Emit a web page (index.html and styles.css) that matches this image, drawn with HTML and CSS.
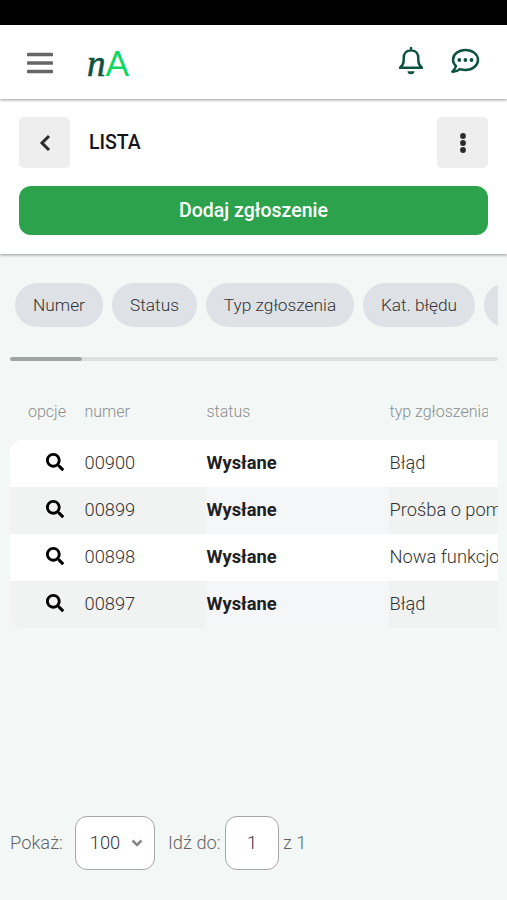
FILE: index.html
```html
<!DOCTYPE html>
<html lang="pl">
<head>
<meta charset="utf-8">
<meta name="viewport" content="width=device-width, initial-scale=1">
<title>Lista</title>
<link rel="stylesheet" href="styles.css">
</head>
<body>
<svg class="defs" width="0" height="0" aria-hidden="true">
<symbol id="search" viewBox="0 0 512 512"><path d="M505 442.700 405.300 343c-4.500-4.500-10.600-7-17-7H372c27.600-35.300 44-79.700 44-128C416 93.100 322.900 0 208 0S0 93.100 0 208s93.100 208 208 208c48.300 0 92.700-16.400 128-44v16.300c0 6.400 2.500 12.500 7 17l99.700 99.700c9.400 9.400 24.600 9.400 33.900 0l28.300-28.300c9.400-9.400 9.400-24.600.1-34zM208 336c-70.700 0-128-57.200-128-128 0-70.700 57.200-128 128-128 70.700 0 128 57.200 128 128 0 70.700-57.200 128-128 128z"/></symbol>
</svg>
<div class="statusbar"></div>
<header class="topbar">
  <svg class="menu" viewBox="0 0 26 24"><path d="M1.500 3.500h23M1.500 12h23M1.500 20.500h23"/></svg>
  <div class="logo"><span class="logo-n">n</span><span class="logo-a">A</span></div>
  <svg class="bell" viewBox="0 0 26 30"><path class="line" d="M13 4.300C8.200 4.300 5.700 8 5.700 12v2.500c0 3.500-1.500 5.400-3.600 7.300h21.800c-2.100-1.900-3.600-3.800-3.600-7.300V12c0-4-2.500-7.700-7.300-7.700zM13 1.900v2.400"/><path class="solid" d="M9.500 25.200h7a3.500 3 0 0 1-7 0z"/></svg>
  <svg class="chat" viewBox="0 0 30 26"><path class="line" d="M15.500 2C8.500 2 3 6.300 3 11.700c0 2.500 1.100 4.500 3 6.200-.4 2.200-1.600 4.100-3.600 5.800 3 .1 5.500-.8 7.400-2.600 1.700.6 3.600.9 5.700.9C22.500 22 28 17.400 28 11.900S22.500 2 15.500 2z"/><circle class="solid" cx="9.300" cy="12" r="1.900"/><circle class="solid" cx="15.400" cy="12" r="1.900"/><circle class="solid" cx="21.500" cy="12" r="1.900"/></svg>
</header>
<section class="heading">
  <div class="heading-row">
    <button class="square" aria-label="Wstecz"><svg class="back" viewBox="0 0 12 18"><path d="M10 2 3 9l7 7"/></svg></button>
    <h1>LISTA</h1>
    <button class="square" aria-label="Menu"><svg class="dots" viewBox="0 0 6 20"><circle cx="3" cy="3" r="2.900"/><circle cx="3" cy="10" r="2.900"/><circle cx="3" cy="17" r="2.900"/></svg></button>
  </div>
  <button class="add">Dodaj zgłoszenie</button>
</section>
<main>
  <div class="chips">
    <span class="chip numer">Numer</span>
    <span class="chip status">Status</span>
    <span class="chip typ">Typ zgłoszenia</span>
    <span class="chip kat">Kat. błędu</span>
    <span class="chip more"></span>
  </div>
  <div class="scroll"><div class="thumb"></div></div>
  <div class="table">
    <div class="row head"><span class="opt">opcje</span><span>numer</span><span>status</span><span class="last">typ zgłoszenia</span></div>
    <div class="row"><span class="opt"><svg><use href="#search"/></svg></span><span>00900</span><b>Wysłane</b><span>Błąd</span></div>
    <div class="row"><span class="opt"><svg><use href="#search"/></svg></span><span>00899</span><b>Wysłane</b><span>Prośba o pom</span></div>
    <div class="row"><span class="opt"><svg><use href="#search"/></svg></span><span>00898</span><b>Wysłane</b><span>Nowa funkcjo</span></div>
    <div class="row"><span class="opt"><svg><use href="#search"/></svg></span><span>00897</span><b>Wysłane</b><span>Błąd</span></div>
  </div>
</main>
<footer>
  <span class="show">Pokaż:</span>
  <div class="field select">100<svg viewBox="0 0 12 8"><path d="m1.500 1.500 4.500 4.500 4.500-4.500"/></svg></div>
  <span class="goto">Idź do:</span>
  <div class="field page">1</div>
  <span>z 1</span>
</footer>
</body>
</html>
```

FILE: styles.css
```css
* { box-sizing: border-box; }
body {
  margin: 0;
  height: 900px;
  display: flex;
  flex-direction: column;
  overflow: hidden;
  background: #f3f7f6;
  font: 300 18.300px/24px Roboto, sans-serif;
  color: #333;
}
svg { display: block; flex: none; }
.defs { position: absolute; }
button { border: 0; padding: 0; font: inherit; }
.statusbar { height: 25px; background: #000; flex: none; }
.topbar {
  height: 74px;
  flex: none;
  display: flex;
  align-items: flex-start;
  padding: 0 27px 0 27px;
  background: #fff;
  box-shadow: 0 1px 3px rgba(0,0,0,.4);
  position: relative;
  z-index: 2;
}
.menu { width: 26px; height: 24px; margin-top: 26px; stroke: #666; stroke-width: 3.600; stroke-linecap: round; }
.logo { display: flex; align-items: baseline; margin: 17px auto 0 34px; line-height: 40px; }
.logo-n { font: italic 400 37px/40px "Liberation Serif", serif; color: #12513f; -webkit-text-stroke: .6px #12513f; }
.logo-a { font: 400 35px/40px Lato, sans-serif; color: #12d863; }
.bell { width: 26px; height: 30px; margin-top: 21px; }
.chat { width: 30px; height: 26px; margin: 23px 0 0 26px; }
.line { fill: none; stroke: #0b5340; stroke-width: 2.500; stroke-linejoin: round; stroke-linecap: round; }
.solid { fill: #0b5340; }
.heading {
  height: 155px;
  flex: none;
  padding: 18px 19px 0;
  background: #fff;
  box-shadow: 0 1px 3px rgba(0,0,0,.4);
}
.heading-row { display: flex; align-items: center; }
.square { width: 51px; height: 51px; border-radius: 5px; background: #eee; display: flex; align-items: center; justify-content: center; }
.back { width: 12px; height: 18px; fill: none; stroke: #2b2b2b; stroke-width: 3; }
.dots { width: 6px; height: 20px; fill: #2b2b2b; }
h1 { margin: 0 auto 0 19px; padding-top: 1px; font-size: 19.500px; font-weight: 500; color: #15151c; }
.add { display: block; width: 100%; height: 49px; margin-top: 18px; border-radius: 12px; background: #2ca24c; color: #fff; font-size: 19.500px; font-weight: 500; }
main { padding: 0 9px 0 10px; overflow: hidden; }
.chips { display: flex; gap: 9px; padding: 29px 0 0 5px; overflow: hidden; }
.chip { height: 44px; flex: none; border-radius: 22px; background: #dee1e6; text-align: center; font-size: 17.300px; line-height: 44px; }
.numer { width: 88px; }
.status { width: 85px; }
.typ { width: 148px; }
.kat { width: 112px; }
.more { width: 100px; }
.scroll { height: 4px; margin-top: 30px; border-radius: 2px; background: #dce0df; }
.thumb { width: 72px; height: 4px; border-radius: 2px; background: #9fa5a4; }
.table { margin-top: 26px; border-radius: 12px 0 0 12px; overflow: hidden; }
.row { display: grid; grid-template-columns: 74px 122px 183px 109px; height: 47px; line-height: 45px; white-space: nowrap; background: #fff; }
.row > * { overflow: hidden; padding-left: .5px; }
.row:nth-child(odd) { background: #f1f2f2; }
.row:nth-child(odd) b { background: #f5f6f8; }
.row:nth-child(2) { border-top-left-radius: 12px; }
.row.head { height: 53px; line-height: 49px; font-size: 16px; color: #8c8f8f; background: none; }
.row.head .opt { padding-left: 18px; }
.head .last { margin-right: 10px; }
.opt svg { width: 18px; height: 18px; margin: 13px 0 0 35.500px; fill: #000; }
b { font-weight: 700; color: #202022; }
footer { display: flex; align-items: center; margin: auto 0 30px 10px; height: 54px; color: #666; }
.field { height: 54px; border: 1px solid #a6a6a6; border-radius: 12px; background: #fff; color: #333; display: flex; align-items: center; justify-content: center; }
.show { width: 65px; }
.select { width: 80px; gap: 11px; padding-left: 3px; }
.select svg { width: 12px; height: 8px; fill: none; stroke: #888; stroke-width: 2.600; }
.goto { width: 57px; margin-left: 13px; }
.page { width: 54px; margin-right: 4px; }
```
